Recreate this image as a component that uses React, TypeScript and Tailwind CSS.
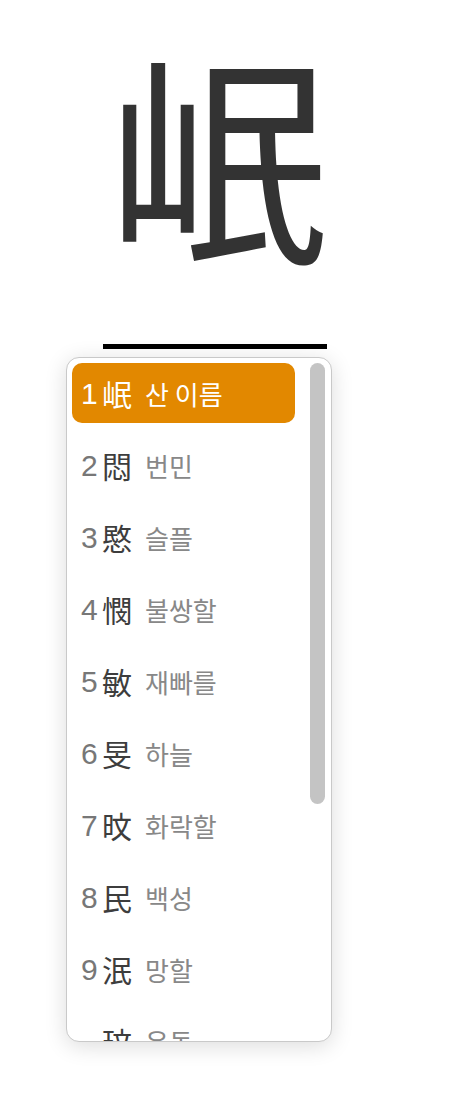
import React from "react";

const items: [string, string, string][] = [
  ["1", "岷", "산 이름"],
  ["2", "悶", "번민"],
  ["3", "愍", "슬플"],
  ["4", "憫", "불쌍할"],
  ["5", "敏", "재빠를"],
  ["6", "旻", "하늘"],
  ["7", "旼", "화락할"],
  ["8", "民", "백성"],
  ["9", "泯", "망할"],
  ["", "玟", "옥돌"],
];

const cjk = { fontFamily: '"Noto Sans CJK KR", "Noto Sans CJK SC", sans-serif' };
const lat = { fontFamily: '"Liberation Sans", Arial, sans-serif' };

export default function App() {
  return (
    <div className="w-[460px] h-[1112px] bg-white flex flex-col items-start overflow-hidden">
      <div
        className="ml-[107px] mt-[18px] text-[222px] leading-[265px] text-[#333333]"
        style={cjk}
      >
        岷
      </div>
      <div className="ml-[103px] mt-[61px] w-[224px] h-[5px] bg-black" />
      <div className="ml-[66px] mt-[8px] w-[266px] h-[685px] rounded-[13px] border border-[#c9c9c9] bg-white shadow-[0_4px_22px_rgba(0,0,0,0.14)] relative overflow-hidden">
        <div className="flex flex-col gap-[12px] p-[5px] w-[233px]">
          {items.map(([n, h, k], i) => {
            const sel = i === 0;
            return (
              <div
                key={h}
                className={
                  "h-[60px] shrink-0 flex items-center pl-[9px] rounded-[10px] " +
                  (sel ? "bg-[#e28800]" : "")
                }
              >
                <span
                  className={"w-[21px] text-[30px] " + (sel ? "text-white" : "text-[#777777]")}
                  style={lat}
                >
                  {n}
                </span>
                <span
                  className={"text-[30px] " + (sel ? "text-white" : "text-[#3d3d3d]")}
                  style={cjk}
                >
                  {h}
                </span>
                <span
                  className={"ml-[13px] text-[26px] " + (sel ? "text-white" : "text-[#888888]")}
                  style={cjk}
                >
                  {k}
                </span>
              </div>
            );
          })}
        </div>
        <div className="absolute right-[6px] top-[5px] w-[15px] h-[441px] rounded-full bg-[#c4c4c4]" />
      </div>
    </div>
  );
}
